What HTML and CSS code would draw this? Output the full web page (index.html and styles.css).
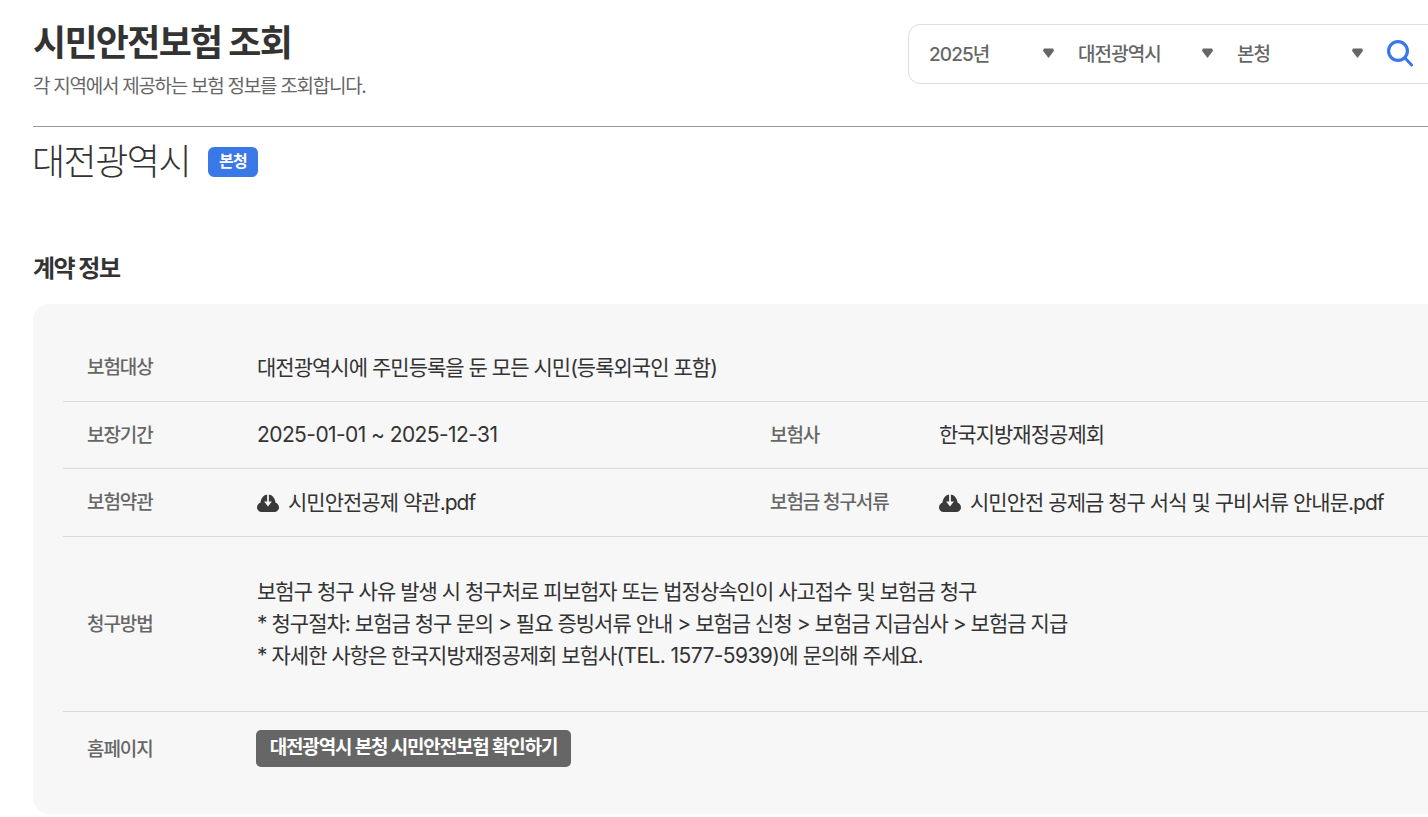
FILE: index.html
```html
<!DOCTYPE html>
<html lang="ko">
<head>
<meta charset="utf-8">
<title>시민안전보험 조회</title>
<link rel="stylesheet" href="styles.css">
</head>
<body>
<main class="page">
  <header class="head">
    <div class="head-text">
      <h1 class="title">시민안전보험 조회</h1>
      <p class="subtitle">각 지역에서 제공하는 보험 정보를 조회합니다.</p>
    </div>
    <form class="search">
      <div class="select sel-year"><span>2025년</span><i class="caret"></i></div>
      <div class="select sel-city"><span>대전광역시</span><i class="caret"></i></div>
      <div class="select sel-dist"><span>본청</span><i class="caret"></i></div>
      <svg class="search-icon" viewBox="0 0 26 27" width="26" height="27" aria-hidden="true"><circle cx="11" cy="11" r="9.4" fill="none" stroke="#3b78e7" stroke-width="3.2"/><path d="M18 18 24.6 25" fill="none" stroke="#3b78e7" stroke-width="3" stroke-linecap="round"/></svg>
    </form>
  </header>
  <div class="region">
    <h2 class="region-name">대전광역시</h2>
    <span class="badge">본청</span>
  </div>
  <h3 class="section-title">계약 정보</h3>
  <section class="card">
    <div class="row r-1">
      <div class="label">보험대상</div>
      <div class="value">대전광역시에 주민등록을 둔 모든 시민(등록외국인 포함)</div>
    </div>
    <div class="row r-2">
      <div class="label">보장기간</div>
      <div class="value half latin">2025-01-01 ~ 2025-12-31</div>
      <div class="label label-2">보험사</div>
      <div class="value">한국지방재정공제회</div>
    </div>
    <div class="row r-3">
      <div class="label">보험약관</div>
      <div class="value half file"><svg class="dl" viewBox="0 0 22 18" width="22" height="18" aria-hidden="true"><path fill="#3a3a3a" d="M4.500 18C2 18 0 16 0 13.400c0-2.300 1.600-4.100 3.400-4.600C4 3.800 7 0.500 11 0.500s7 3.300 7.600 8.300c1.800.5 3.400 2.300 3.400 4.600C22 16 20 18 17.500 18z"/><path fill="#f7f7f7" d="M10.100 0h1.800v7.400h3L11 12.600 7.100 7.400h3z"/></svg><span>시민안전공제 약관.pdf</span></div>
      <div class="label label-2">보험금 청구서류</div>
      <div class="value file"><svg class="dl" viewBox="0 0 22 18" width="22" height="18" aria-hidden="true"><path fill="#3a3a3a" d="M4.500 18C2 18 0 16 0 13.400c0-2.300 1.600-4.100 3.400-4.600C4 3.800 7 0.500 11 0.500s7 3.300 7.600 8.300c1.800.5 3.400 2.300 3.400 4.600C22 16 20 18 17.500 18z"/><path fill="#f7f7f7" d="M10.100 0h1.800v7.400h3L11 12.600 7.100 7.400h3z"/></svg><span>시민안전 공제금 청구 서식 및 구비서류 안내문.pdf</span></div>
    </div>
    <div class="row r-4">
      <div class="label">청구방법</div>
      <div class="value lines">보험구 청구 사유 발생 시 청구처로 피보험자 또는 법정상속인이 사고접수 및 보험금 청구<br>* 청구절차: 보험금 청구 문의 &gt; 필요 증빙서류 안내 &gt; 보험금 신청 &gt; 보험금 지급심사 &gt; 보험금 지급<br>* 자세한 사항은 한국지방재정공제회 보험사<span class="latin">(TEL. 1577-5939)</span>에 문의해 주세요.</div>
    </div>
    <div class="row r-5">
      <div class="label">홈페이지</div>
      <div class="value"><a class="link-btn">대전광역시 본청 시민안전보험 확인하기</a></div>
    </div>
  </section>
</main>
</body>
</html>
```
FILE: styles.css
```css
* { box-sizing: border-box; }
html, body { margin: 0; padding: 0; height: 817px; overflow: hidden; background: #fff; }
body { font-family: Inter, "Noto Sans CJK KR", sans-serif; color: #333; }
.page { width: 1460px; padding-left: 33px; }
.head {
  display: flex; justify-content: space-between; align-items: flex-start;
  height: 127px; border-bottom: 1px solid #999; padding-top: 18px;
}
.title { margin: 0; font-size: 36px; line-height: 50px; font-weight: 700; letter-spacing: -1.7px; color: #333; }
.subtitle { margin: 6px 0 0; font-size: 19px; line-height: 26px; font-weight: 400; letter-spacing: -1.27px; color: #666; }
.search {
  display: flex; align-items: center; width: 552px; height: 60px;
  margin-top: 6px; padding-left: 20px;
  border: 1px solid #ddd; border-radius: 12px; background: #fff;
}
.select { display: flex; align-items: center; justify-content: space-between; margin-top: -4px; font-size: 19px; font-weight: 500; letter-spacing: -0.9px; color: #666; }
.sel-year { width: 125px; margin-right: 24px; }
.sel-city { width: 135px; margin-right: 24px; }
.sel-dist { width: 126px; margin-right: 22px; }
.caret { width: 11px; height: 11px; margin-top: 2px; background: #666; clip-path: polygon(8% 8%, 92% 8%, 100% 30%, 50% 96%, 0 30%); }
.search-icon { flex: none; margin-top: -2px; margin-left: 2px; }
.region { display: flex; align-items: center; height: 69px; }
.region-name { margin: 0 0 0 -1px; font-size: 36px; line-height: 44px; font-weight: 300; letter-spacing: -1.5px; color: #333; }
.badge {
  display: block; margin-left: 18px; width: 50px; height: 30px; line-height: 29px; text-align: center;
  background: #3b78e7; color: #fff; font-size: 16px; font-weight: 700; letter-spacing: -0.5px; border-radius: 6px;
}
.section-title { margin: 55px 0 0; height: 36px; font-size: 24px; line-height: 36px; font-weight: 700; letter-spacing: -1.5px; color: #333; }
.card { margin-top: 17px; padding: 30px 30px 27px; background: #f7f7f7; border-radius: 16px; height: 510px; }
.row { display: flex; align-items: center; border-bottom: 1px solid #ddd; }
.r-1 { height: 68px; }
.r-2 { height: 67px; }
.r-3 { height: 68px; }
.r-4 { height: 175px; }
.r-5 { height: 74px; border-bottom: 0; }
.label { flex: none; width: 194px; padding-left: 24px; padding-top: 1px; font-size: 19px; line-height: 26px; font-weight: 500; letter-spacing: -1.1px; color: #666; }
.label-2 { width: 193px; }
.value { font-size: 21px; line-height: 32px; font-weight: 400; letter-spacing: -0.98px; color: #333; }
.latin { letter-spacing: -0.58px; }
.half { width: 489px; flex: none; }
.file { display: flex; align-items: center; gap: 9px; }
.dl { flex: none; }
.link-btn {
  display: block; margin-left: -1px; margin-top: -1px; width: 315px; height: 37px; line-height: 36px; text-align: center;
  background: #666; color: #fff; font-size: 19px; font-weight: 700; letter-spacing: -1.15px; border-radius: 5px;
}
```
